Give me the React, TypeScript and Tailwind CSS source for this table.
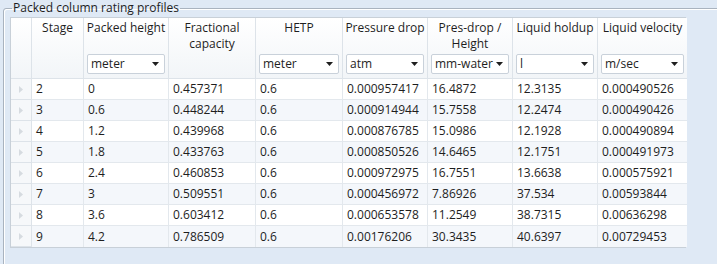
const columns = [
  { title: ["Stage"], unit: null },
  { title: ["Packed height"], unit: "meter" },
  { title: ["Fractional", "capacity"], unit: null },
  { title: ["HETP"], unit: "meter" },
  { title: ["Pressure drop"], unit: "atm" },
  { title: ["Pres-drop /", "Height"], unit: "mm-water" },
  { title: ["Liquid holdup"], unit: "l" },
  { title: ["Liquid velocity"], unit: "m/sec" },
];

const rows = [
  ["2", "0", "0.457371", "0.6", "0.000957417", "16.4872", "12.3135", "0.000490526"],
  ["3", "0.6", "0.448244", "0.6", "0.000914944", "15.7558", "12.2474", "0.000490426"],
  ["4", "1.2", "0.439968", "0.6", "0.000876785", "15.0986", "12.1928", "0.000490894"],
  ["5", "1.8", "0.433763", "0.6", "0.000850526", "14.6465", "12.1751", "0.000491973"],
  ["6", "2.4", "0.460853", "0.6", "0.000972975", "16.7551", "13.6638", "0.000575921"],
  ["7", "3", "0.509551", "0.6", "0.000456972", "7.86926", "37.534", "0.00593844"],
  ["8", "3.6", "0.603412", "0.6", "0.000653578", "11.2549", "38.7315", "0.00636298"],
  ["9", "4.2", "0.786509", "0.6", "0.00176206", "30.3435", "40.6397", "0.00729453"],
];

function UnitSelect({ value }: { value: string }) {
  return (
    <div className="mx-[3px] flex h-[20px] items-center justify-between rounded-[2px] border border-[#c9d1da] bg-white pl-[3px] pr-[5px]">
      <span className="leading-none">{value}</span>
      <svg width="7" height="4" viewBox="0 0 7 4" className="shrink-0">
        <path d="M0 0h7L3.5 4z" fill="#1e1e1e" />
      </svg>
    </div>
  );
}

export default function App() {
  return (
    <div className="relative h-[264px] w-[717px] overflow-hidden bg-[#dfe9f5] font-['Open_Sans',sans-serif] text-[12px] text-[#1e1e1e]">
      <fieldset className="ml-[3px] h-[300px] w-[740px] rounded-tl-[3px] border border-[#a9b3bf] pl-[6px] pt-[1px] shadow-[inset_1px_1px_0_#ffffff]">
        <legend className="ml-[2px] px-[1px] text-[12px] leading-[16px]">
          Packed column rating profiles
        </legend>
        <div className="grid w-[676px] grid-cols-[21px_52px_85px_87px_87px_85px_85px_85px_89px] border border-[#c8d0d8] bg-white">
          <div className="h-[61px] border-b border-r border-[#dde3e9] bg-gradient-to-b from-white to-[#f2f5f8]" />
          {columns.map((c, i) => (
            <div
              key={i}
              className={`flex h-[61px] flex-col border-b border-[#dde3e9] bg-gradient-to-b from-white to-[#f2f5f8] ${i < columns.length - 1 ? "border-r" : ""}`}
            >
              <div className="flex h-[36px] flex-col pt-[2px] text-center leading-[16px]">
                {c.title.map((t, j) => (
                  <span key={j}>{t}</span>
                ))}
              </div>
              {c.unit && <UnitSelect value={c.unit} />}
            </div>
          ))}
          {rows.map((r, ri) => (
            <div key={ri} className="contents">
              <div className="flex h-[21px] items-center justify-center border-b border-r border-[#dde3e9] bg-[#f6f8fa]">
                <svg width="4" height="7" viewBox="0 0 4 7">
                  <path d="M0 0l4 3.5L0 7z" fill="#d6dbe0" />
                </svg>
              </div>
              {r.map((v, ci) => (
                <div
                  key={ci}
                  className={`flex h-[21px] items-center px-[4px] ${ri < rows.length - 1 ? "border-b" : ""} border-[#e3e8ed] ${ci < r.length - 1 ? "border-r" : ""} ${ri % 2 === 1 ? "bg-[#f4f7fb]" : "bg-white"}`}
                >
                  {v}
                </div>
              ))}
            </div>
          ))}
        </div>
      </fieldset>
    </div>
  );
}
